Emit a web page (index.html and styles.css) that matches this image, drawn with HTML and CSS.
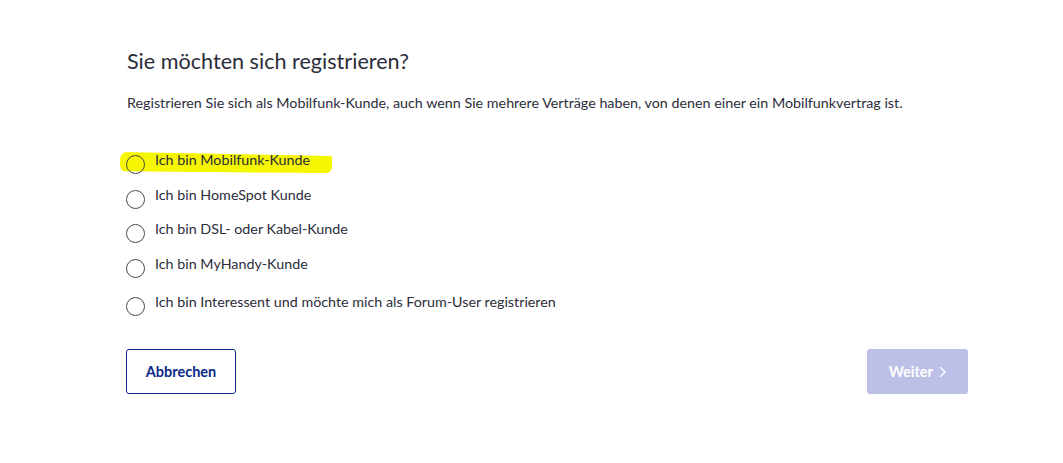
FILE: index.html
```html
<!DOCTYPE html>
<html lang="de">
<head>
    <meta charset="UTF-8">
    <title>Registrierung</title>
    <link rel="stylesheet" href="styles.css">
</head>
<body>
    <div class="container">
        <h1>Sie möchten sich registrieren?</h1>
        <p class="intro">Registrieren Sie sich als Mobilfunk-Kunde, auch wenn Sie mehrere Verträge haben, von denen einer ein Mobilfunkvertrag ist.</p>

        <form class="choices">
            <label class="choice first">
                <span class="marker"></span>
                <input type="radio" name="kunde" value="mobil">
                <span class="text">Ich bin Mobilfunk-Kunde</span>
            </label>
            <label class="choice">
                <input type="radio" name="kunde" value="homespot">
                <span class="text">Ich bin HomeSpot Kunde</span>
            </label>
            <label class="choice">
                <input type="radio" name="kunde" value="dsl">
                <span class="text">Ich bin DSL- oder Kabel-Kunde</span>
            </label>
            <label class="choice">
                <input type="radio" name="kunde" value="myhandy">
                <span class="text">Ich bin MyHandy-Kunde</span>
            </label>
            <label class="choice last">
                <input type="radio" name="kunde" value="forum">
                <span class="text">Ich bin Interessent und möchte mich als Forum-User registrieren</span>
            </label>
        </form>

        <div class="actions">
            <button type="button" class="btn-cancel">Abbrechen</button>
            <button type="button" class="btn-next" disabled>Weiter
                <svg class="chev" width="7" height="12" viewBox="0 0 7 12"><path d="M1 1 L6 6 L1 11" fill="none" stroke="#fff" stroke-width="1.3"/></svg>
            </button>
        </div>
    </div>
</body>
</html>
```

FILE: styles.css
```css
/* Reset */
body, h1, p, form, button {
    margin: 0;
    padding: 0;
    box-sizing: border-box;
}

body {
    background: #fff;
    color: #2b2d3a;
    font-family: Lato, sans-serif;
}

.container {
    width: 842px;
    margin-left: 126px;
    padding-top: 47px;
}

h1 {
    font-size: 21.6px;
    font-weight: 400;
    line-height: 28px;
    margin-left: 1px;
}

.intro {
    font-size: 14.3px;
    line-height: 20px;
    margin-top: 18px;
    margin-left: 1px;
}

/* Radio list */
.choices {
    margin-top: 37px;
    display: flex;
    flex-direction: column;
    gap: 14.5px;
}

.choice {
    position: relative;
    display: flex;
    align-items: flex-start;
    font-size: 14.3px;
    line-height: 20px;
    height: 20px;
}

.choice.last {
    margin-top: 4px;
}

.choice input {
    position: relative;
    appearance: none;
    width: 19px;
    height: 19px;
    margin: 5px 10px 0 0;
    border: 1px solid #4a4a4a;
    border-radius: 50%;
    background: transparent;
    flex-shrink: 0;
}

.choice .text {
    position: relative;
}

/* hand-drawn highlighter stroke */
.marker {
    position: absolute;
    left: -6px;
    top: 2px;
    width: 212px;
    height: 21px;
    background: #f6f600;
    border-radius: 7px 6px 6px 8px;
    clip-path: polygon(0 0, 100% 19%, 100% 100%, 0 92%);
}

/* Buttons */
.actions {
    display: flex;
    justify-content: space-between;
    margin-top: 37px;
}

.actions button {
    height: 45px;
    border-radius: 3px;
    font-family: Lato, sans-serif;
    font-weight: 700;
    font-size: 14.5px;
}

.btn-cancel {
    width: 110px;
    background: #fff;
    border: 1px solid #0b2a86;
    color: #0b2a86;
}

.btn-next {
    width: 101px;
    background: #bcc0e6;
    border: none;
    color: #fff;
}

.chev {
    margin-left: 3px;
    vertical-align: -1px;
}
```
